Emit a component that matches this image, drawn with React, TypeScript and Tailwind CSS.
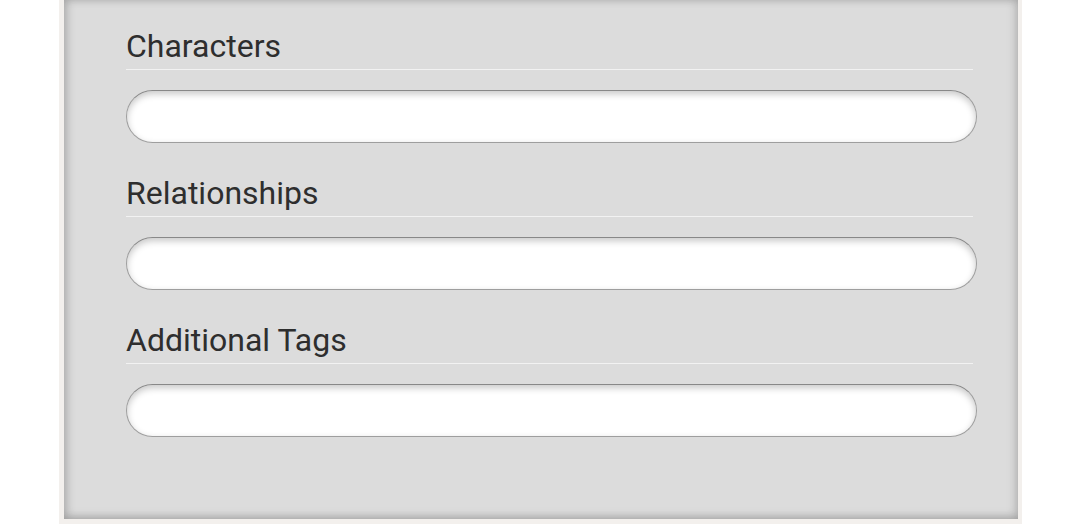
const fields = ["Characters", "Relationships", "Additional Tags"];

function TagField({ label }: { label: string }) {
  return (
    <div className="flex flex-col">
      <label className="block w-[847px] border-b border-[#f2f2f2] pb-[6px] text-[32px] leading-[34px] text-[#2e2e2e]">
        {label}
      </label>
      <input
        type="text"
        className="mt-[20px] h-[53px] w-[851px] rounded-full border border-[#9e9e9e] border-t-[#888888] bg-white px-5 text-[20px] shadow-[inset_0_3px_7px_rgba(0,0,0,0.22)] outline-none"
      />
    </div>
  );
}

export default function App() {
  return (
    <div className="h-[524px] w-[1080px] overflow-hidden bg-white font-['Roboto',sans-serif]">
      <div className="ml-[59px] h-[524px] w-[963px] bg-[#f3f0ed] pb-[5px] pl-[5px] pr-[4px]">
        <div className="flex h-full flex-col gap-[33px] bg-[#dcdcdc] pl-[62px] pt-[29px] shadow-[inset_4px_0_8px_rgba(0,0,0,0.14),inset_-4px_0_8px_rgba(0,0,0,0.1),inset_0_-4px_8px_rgba(0,0,0,0.1)]">
          {fields.map((f) => (
            <TagField key={f} label={f} />
          ))}
        </div>
      </div>
    </div>
  );
}
